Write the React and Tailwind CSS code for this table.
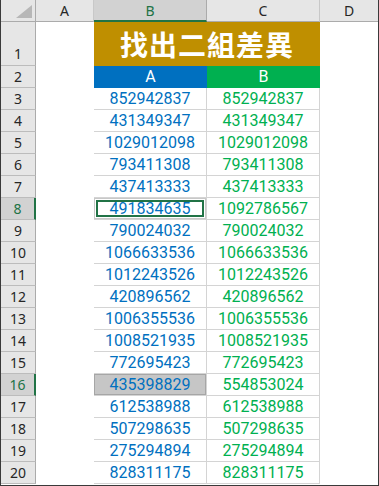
import React from 'react';

const rows = [
  ['852942837', '852942837'],
  ['431349347', '431349347'],
  ['1029012098', '1029012098'],
  ['793411308', '793411308'],
  ['437413333', '437413333'],
  ['491834635', '1092786567'],
  ['790024032', '790024032'],
  ['1066633536', '1066633536'],
  ['1012243526', '1012243526'],
  ['420896562', '420896562'],
  ['1006355536', '1006355536'],
  ['1008521935', '1008521935'],
  ['772695423', '772695423'],
  ['435398829', '554853024'],
  ['612538988', '612538988'],
  ['507298635', '507298635'],
  ['275294894', '275294894'],
  ['828311175', '828311175'],
];

const hdrFont = { fontFamily: '"Noto Sans", "Liberation Sans", sans-serif' };

const RowHeader = ({ label, active, tall }) => (
  <div
    className={`flex justify-center border-b border-[#bcbcbc] text-[14px] leading-none ${
      tall ? 'items-end pb-[4px]' : 'items-center'
    } ${
      active
        ? 'bg-[#d2d2d2] text-[#217346] border-r-2 border-r-[#217346]'
        : 'bg-[#e6e6e6] text-[#262626] border-r border-r-[#ababab]'
    }`}
    style={hdrFont}
  >
    {label}
  </div>
);

export default function App() {
  return (
    <div className="w-[379px] h-[486px] bg-white border-r border-b border-l border-[#3a3a3a] overflow-hidden">
      <div
        className="grid grid-cols-[35px_58px_113px_113px_58px] grid-rows-[22px_44px_repeat(19,22px)]"
        style={{ fontFamily: 'Roboto, "Noto Sans CJK TC", sans-serif' }}
      >
        {/* corner */}
        <div className="relative bg-[#e6e6e6] border-r border-b border-[#ababab]">
          <svg className="absolute left-[15px] top-[5px]" width="16" height="13" viewBox="0 0 16 13">
            <polygon points="16,0 16,13 0,13" fill="#b7b7b7" />
          </svg>
        </div>
        {/* column headers */}
        <div className="flex items-center justify-center bg-[#e6e6e6] border-r border-[#c8c8c8] border-b border-b-[#ababab] text-[14px] text-[#262626]" style={hdrFont}>A</div>
        <div className="flex items-center justify-center bg-[#d2d2d2] border-r border-[#ababab] border-b-2 border-b-[#217346] text-[14px] text-[#217346]" style={hdrFont}>B</div>
        <div className="flex items-center justify-center bg-[#e6e6e6] border-r border-[#c8c8c8] border-b border-b-[#ababab] text-[14px] text-[#262626]" style={hdrFont}>C</div>
        <div className="flex items-center justify-center bg-[#e6e6e6] border-b border-[#ababab] text-[14px] text-[#262626]" style={hdrFont}>D</div>

        {/* row 1 */}
        <RowHeader label="1" tall />
        <div />
        <div className="col-span-2 flex items-center justify-center bg-[#bf8f00] text-white text-[28px] font-bold tracking-[1px]" style={{ fontFamily: '"Noto Sans CJK TC", "Noto Sans CJK SC", sans-serif' }}>
          找出二組差異
        </div>
        <div />

        {/* row 2 */}
        <RowHeader label="2" />
        <div />
        <div className="flex items-center justify-center bg-[#0070c0] text-white text-[16px]">A</div>
        <div className="flex items-center justify-center bg-[#00b050] text-white text-[16px]">B</div>
        <div />

        {rows.map(([a, b], i) => {
          const n = i + 3;
          const active = n === 8 || n === 16;
          return (
            <React.Fragment key={n}>
              <RowHeader label={n} active={active} />
              <div />
              <div
                className={`relative flex items-center justify-center border-b border-r border-[#d4d4d4] text-[16px] text-[#0070c0] ${
                  n === 16 ? 'bg-[#c6c6c6]' : ''
                }`}
              >
                {n === 8 && (
                  <>
                    <span className="absolute inset-0 border border-[#c8c8c8]" />
                    <span className="absolute inset-[2px] border-2 border-[#217346]" />
                  </>
                )}
                {n === 16 && <span className="absolute inset-0 border border-[#a6a6a6]" />}
                <span className="relative">{a}</span>
              </div>
              <div className="flex items-center justify-center border-b border-r border-[#d4d4d4] text-[16px] text-[#00b050]">
                {b}
              </div>
              <div />
            </React.Fragment>
          );
        })}
      </div>
    </div>
  );
}
